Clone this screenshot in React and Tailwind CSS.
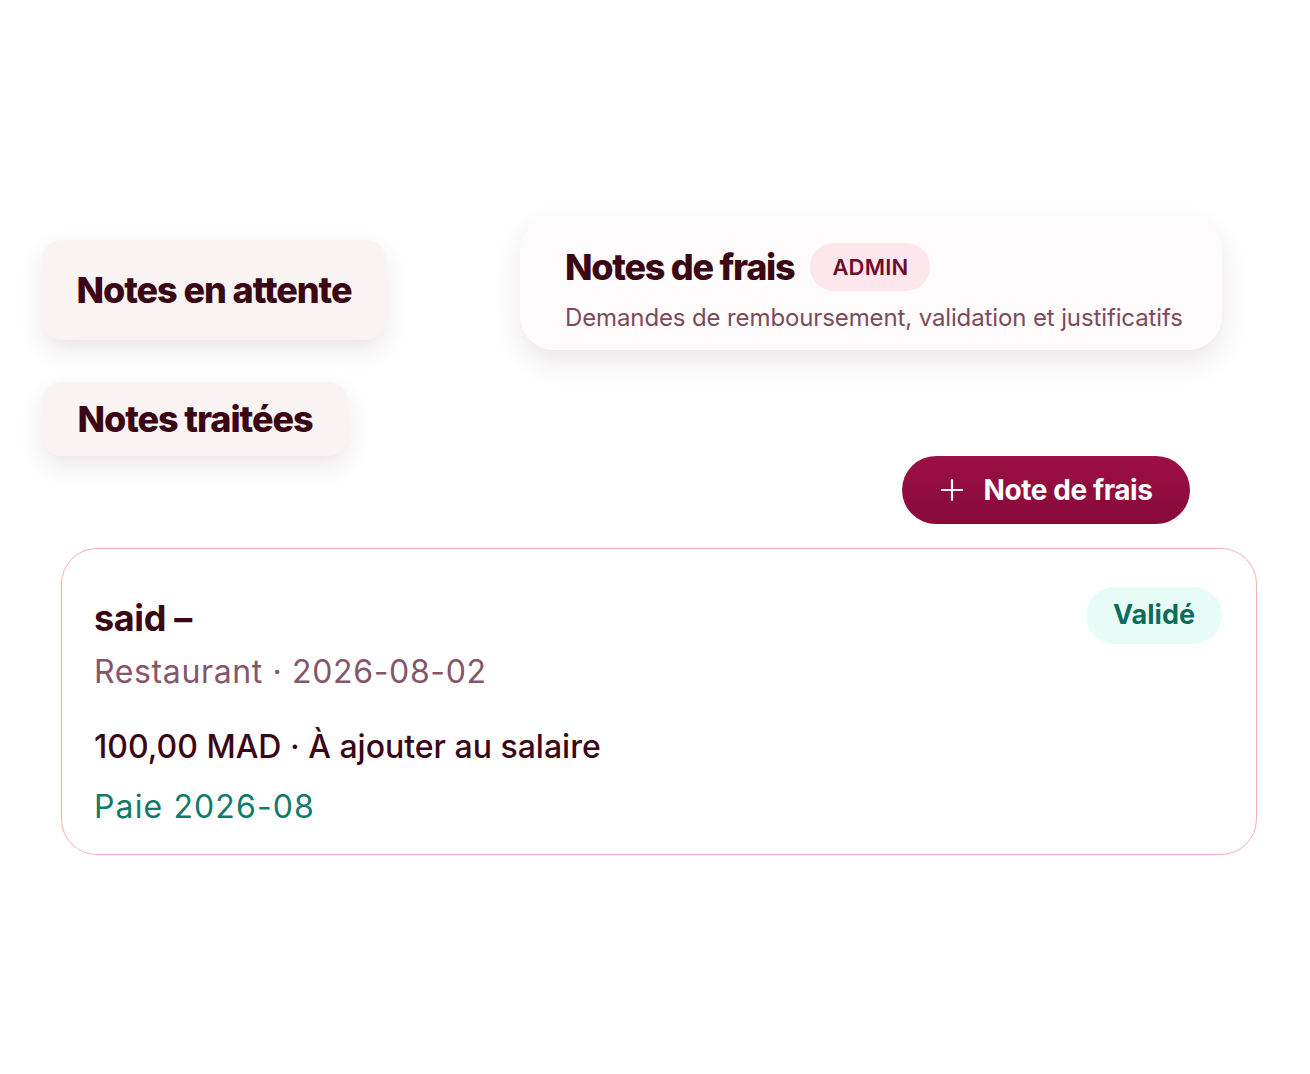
import React from 'react';

const font = { fontFamily: 'Inter, "Noto Sans", sans-serif' };

const Tab = ({ label, className }) => (
  <div className={`flex items-center rounded-[20px] bg-[#f9f3f4] shadow-[0_10px_24px_rgba(60,10,20,0.10)] ${className}`}>
    <span className="text-[36px] font-extrabold tracking-[-0.03em] text-[#3b0714]">{label}</span>
  </div>
);

const App = () => {
  return (
    <div className="min-h-[1074px] w-[1310px] bg-white" style={font}>
      <div className="flex items-start pt-[216px] pl-[42px]">
        {/* tabs */}
        <div className="mt-[24px] flex w-[478px] flex-col items-start gap-[42px]">
          <Tab label="Notes en attente" className="h-[100px] w-[344px] justify-center" />
          <Tab label="Notes traitées" className="h-[74px] w-[306px] justify-center" />
        </div>

        {/* header + action */}
        <div className="flex flex-col">
          <div className="flex h-[134px] w-[702px] flex-col justify-center rounded-[34px] bg-[#fdfbfb] pl-[45px] pt-[10px] shadow-[0_12px_28px_rgba(60,10,20,0.10)]">
            <div className="flex items-center gap-[16px]">
              <h1 className="text-[36px] font-extrabold tracking-[-0.035em] text-[#3b0714]">Notes de frais</h1>
              <span className="flex h-[48px] items-center rounded-full bg-[#fde6ec] px-[22px] text-[22px] font-semibold tracking-[0.01em] text-[#6e0a2c]">
                ADMIN
              </span>
            </div>
            <p className="mt-[6px] text-[24px] tracking-[-0.005em] text-[#7d4a5c]">
              Demandes de remboursement, validation et justificatifs
            </p>
          </div>

          <button className="mt-[106px] mr-[32px] flex h-[68px] w-[288px] items-center justify-center gap-[20px] self-end rounded-full bg-gradient-to-b from-[#9c1044] to-[#870a39] text-white">
            <svg width="24" height="24" viewBox="0 0 24 24" fill="none" stroke="currentColor" strokeWidth="2.2" strokeLinecap="round">
              <path d="M12 2v20M2 12h20" />
            </svg>
            <span className="text-[28px] font-bold tracking-[-0.015em]">Note de frais</span>
          </button>
        </div>
      </div>

      {/* expense card */}
      <div className="ml-[61px] mt-[24px] flex h-[307px] w-[1196px] items-start justify-between rounded-[36px] border-[1.5px] border-[#f7b0b0] bg-white pl-[32px] pr-[34px] pt-[38px]">
        <div className="flex flex-col">
          <div className="mt-[10px] text-[36px] font-bold leading-[42px] tracking-[-0.01em] text-[#3b0714]">said –</div>
          <div className="mt-[13px] text-[32px] leading-[40px] tracking-[0.02em] text-[#85566a]">Restaurant · 2026-08-02</div>
          <div className="mt-[35px] text-[32px] font-medium leading-[40px] tracking-normal text-[#3b0714]">100,00 MAD · À ajouter au salaire</div>
          <div className="mt-[20px] text-[32px] leading-[40px] tracking-[0.035em] text-[#0f7b6c]">Paie 2026-08</div>
        </div>
        <span className="flex h-[57px] items-center rounded-full bg-[#e7fcf6] px-[27px] text-[27px] font-bold tracking-normal text-[#0e6b5c]">
          Validé
        </span>
      </div>
    </div>
  );
};

export default App;
